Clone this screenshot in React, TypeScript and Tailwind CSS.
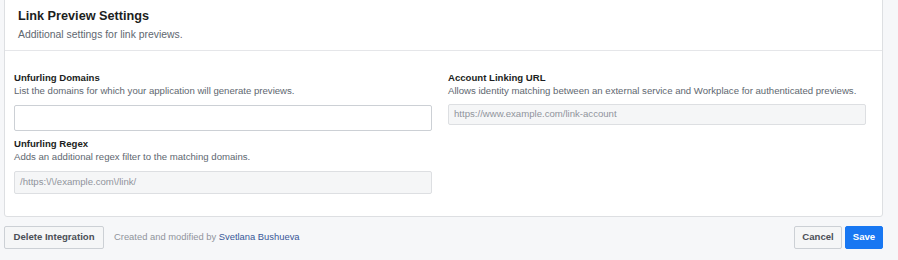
import React from "react";

export default function App() {
  return (
    <div
      className="w-[898px] h-[260px] bg-[#f6f7f9] overflow-hidden flex flex-col"
      style={{ fontFamily: '"Liberation Sans", Arial, sans-serif' }}
    >
      <div className="ml-[4px] w-[879px] h-[218px] mt-[-1px] bg-white border border-[#dddfe2] rounded-b-[3px] flex flex-col">
        <div className="h-[51px] border-b border-[#e5e6e9] pl-[13px] pt-[8px]">
          <div className="text-[12.7px] leading-[16px] font-bold text-[#1c1e21]">Link Preview Settings</div>
          <div className="text-[10.4px] leading-[14px] mt-[4px] text-[#606770]">Additional settings for link previews.</div>
        </div>
        <div className="flex gap-[16px] pl-[9px] pt-[21px]">
          <div className="w-[418px] flex flex-col">
            <div className="text-[9.6px] leading-[12px] font-bold text-[#1c1e21]">Unfurling Domains</div>
            <div className="text-[9.6px] leading-[12px] mt-[1px] text-[#606770] whitespace-nowrap">List the domains for which your application will generate previews.</div>
            <div className="h-[26px] mt-[8px] border border-[#ccd0d5] rounded-[2px] bg-white"></div>
            <div className="text-[9.6px] leading-[12px] mt-[7px] font-bold text-[#1c1e21]">Unfurling Regex</div>
            <div className="text-[9.6px] leading-[12px] mt-[1px] text-[#606770] whitespace-nowrap">Adds an additional regex filter to the matching domains.</div>
            <div className="h-[23px] mt-[8px] border border-[#dddfe2] rounded-[2px] bg-[#f5f6f7] flex items-center pl-[5px] text-[9.6px] text-[#90949c]">/https:\/\/example.com\/link/</div>
          </div>
          <div className="w-[418px] flex flex-col">
            <div className="text-[9.6px] leading-[12px] font-bold text-[#1c1e21]">Account Linking URL</div>
            <div className="text-[9.6px] leading-[12px] mt-[1px] text-[#606770] whitespace-nowrap">Allows identity matching between an external service and Workplace for authenticated previews.</div>
            <div className="h-[21px] mt-[7px] border border-[#dddfe2] rounded-[2px] bg-[#f5f6f7] flex items-center pl-[5px] text-[9.6px] text-[#90949c]">https://www.example.com/link-account</div>
          </div>
        </div>
      </div>
      <div className="flex items-center mt-[9px] pl-[4px] w-[883px]">
        <button className="h-[23px] w-[100px] border border-[#ccd0d5] rounded-[2px] bg-[#f5f6f7] text-[9.6px] font-bold text-[#4b4f56]">Delete Integration</button>
        <div className="ml-[10px] text-[9.4px] text-[#90949c]">
          Created and modified by <span className="text-[#385898]">Svetlana Bushueva</span>
        </div>
        <div className="ml-auto flex gap-[3px]">
          <button className="h-[23px] w-[48px] border border-[#ccd0d5] rounded-[2px] bg-[#f5f6f7] text-[9.6px] font-bold text-[#4b4f56]">Cancel</button>
          <button className="h-[23px] w-[38px] border border-[#1877f2] rounded-[2px] bg-[#1877f2] text-[9.6px] font-bold text-white">Save</button>
        </div>
      </div>
    </div>
  );
}
